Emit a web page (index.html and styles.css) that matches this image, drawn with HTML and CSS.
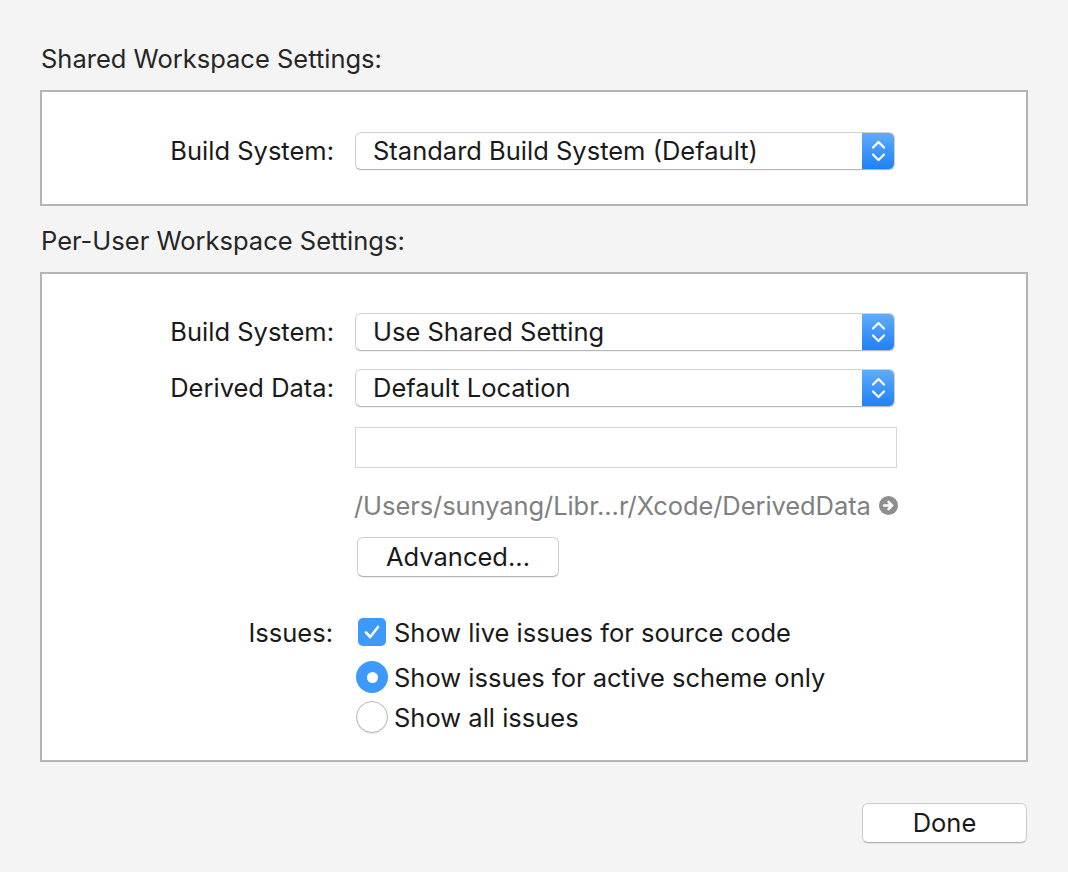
FILE: index.html
```html
<!DOCTYPE html>
<html>
<head>
<meta charset="utf-8">
<link rel="stylesheet" href="styles.css">
</head>
<body>
<div class="sheet">
  <div class="heading h1">Shared Workspace Settings:</div>
  <div class="box box1">
    <div class="row r-popup1">
      <div class="label">Build System:</div>
      <div class="popup">
        <span class="popup-text">Standard Build System (Default)</span>
        <span class="stepper"><svg width="33" height="38" viewBox="0 0 33 38"><path d="M11 15.5 L16.5 10 L22 15.5" fill="none" stroke="#fff" stroke-width="2.2" stroke-linecap="round" stroke-linejoin="round"/><path d="M11 22.5 L16.5 28 L22 22.5" fill="none" stroke="#fff" stroke-width="2.2" stroke-linecap="round" stroke-linejoin="round"/></svg></span>
      </div>
    </div>
  </div>

  <div class="heading h2">Per-User Workspace Settings:</div>
  <div class="box box2">
    <div class="row r-popup1">
      <div class="label">Build System:</div>
      <div class="popup">
        <span class="popup-text">Use Shared Setting</span>
        <span class="stepper"><svg width="33" height="38" viewBox="0 0 33 38"><path d="M11 15.5 L16.5 10 L22 15.5" fill="none" stroke="#fff" stroke-width="2.2" stroke-linecap="round" stroke-linejoin="round"/><path d="M11 22.5 L16.5 28 L22 22.5" fill="none" stroke="#fff" stroke-width="2.2" stroke-linecap="round" stroke-linejoin="round"/></svg></span>
      </div>
    </div>
    <div class="row r-popup2">
      <div class="label">Derived Data:</div>
      <div class="popup">
        <span class="popup-text">Default Location</span>
        <span class="stepper"><svg width="33" height="38" viewBox="0 0 33 38"><path d="M11 15.5 L16.5 10 L22 15.5" fill="none" stroke="#fff" stroke-width="2.2" stroke-linecap="round" stroke-linejoin="round"/><path d="M11 22.5 L16.5 28 L22 22.5" fill="none" stroke="#fff" stroke-width="2.2" stroke-linecap="round" stroke-linejoin="round"/></svg></span>
      </div>
    </div>
    <div class="row r-field">
      <div class="label"></div>
      <div class="field"></div>
    </div>
    <div class="row r-path">
      <div class="label"></div>
      <div class="path">
        <span>/Users/sunyang/Libr...r/Xcode/DerivedData</span>
        <svg class="go" width="19" height="19" viewBox="0 0 19 19"><circle cx="9.5" cy="9.5" r="9.5" fill="#8e8e8e"/><path d="M5 9.5 H13 M9.5 5.8 L13.2 9.5 L9.5 13.2" fill="none" stroke="#fff" stroke-width="2.4" stroke-linecap="round" stroke-linejoin="round"/></svg>
      </div>
    </div>
    <div class="row r-adv">
      <div class="label"></div>
      <div class="button adv">Advanced...</div>
    </div>
    <div class="row r-check">
      <div class="label issues">Issues:</div>
      <div class="opt">
        <span class="checkbox"><svg width="28" height="28" viewBox="0 0 28 28"><path d="M8 14.5 L12.2 19 L20 9" fill="none" stroke="#fff" stroke-width="2.6" stroke-linecap="round" stroke-linejoin="round"/></svg></span>
        <span class="opt-text">Show live issues for source code</span>
      </div>
    </div>
    <div class="row r-radio1">
      <div class="label"></div>
      <div class="opt">
        <span class="radio on"><span class="dot"></span></span>
        <span class="opt-text">Show issues for active scheme only</span>
      </div>
    </div>
    <div class="row r-radio2">
      <div class="label"></div>
      <div class="opt">
        <span class="radio off"></span>
        <span class="opt-text">Show all issues</span>
      </div>
    </div>
  </div>

  <div class="footer">
    <div class="button done">Done</div>
  </div>
</div>
</body>
</html>
```

FILE: styles.css
```css
html, body {
  margin: 0;
  padding: 0;
  background: #f4f4f4;
}
body {
  font-family: Inter, Roboto, "Liberation Sans", sans-serif;
  font-size: 25.5px;
  color: #1c1c1c;
  width: 1068px;
  height: 872px;
  overflow: hidden;
}
.sheet {
  padding: 44px 40px 0 40px;
  width: 988px;
}
.heading {
  height: 30px;
  line-height: 30px;
  padding-left: 1px;
  color: #262626;
}
.h1 { margin-bottom: 16px; }
.h2 { margin-top: 20px; margin-bottom: 16px; }
.box {
  background: #fff;
  border: 2px solid #b4b4b4;
  box-sizing: border-box;
  width: 988px;
}
.box1 {
  height: 116px;
  padding-top: 40px;
}
.box2 {
  height: 490px;
  padding-top: 39px;
}
.row {
  display: flex;
  align-items: center;
}
.label {
  width: 292px;
  flex: none;
  text-align: right;
  margin-right: 21px;
  padding-bottom: 2px;
  color: #1a1a1a;
}
.popup {
  width: 540px;
  height: 38px;
  box-sizing: border-box;
  background: #fff;
  border: 1px solid #cfcfcf;
  border-bottom-color: #b8b8b8;
  border-radius: 6px;
  display: flex;
  align-items: center;
  overflow: hidden;
  box-shadow: 0 1px 1px rgba(0,0,0,0.06);
}
.popup-text {
  flex: 1;
  padding-left: 17px;
  padding-bottom: 2px;
  color: #1a1a1a;
}
.stepper {
  width: 33px;
  height: 38px;
  flex: none;
  background: linear-gradient(#62adfb, #1c80f6);
  display: flex;
  align-items: center;
  justify-content: center;
  margin-right: -1px;
}
.r-popup2 { margin-top: 18px; }
.r-field { margin-top: 20px; }
.field {
  width: 542px;
  height: 41px;
  box-sizing: border-box;
  border: 1px solid #d6d6d6;
  background: #fff;
}
.r-path { margin-top: 22px; height: 30px; }
.path {
  display: flex;
  align-items: center;
  color: #808080;
  margin-left: -1px;
  letter-spacing: -0.08px;
}
.go { margin-left: 8px; }
.r-adv { margin-top: 17px; }
.button {
  height: 40px;
  box-sizing: border-box;
  background: #fff;
  border: 1px solid #cdcdcd;
  border-bottom-color: #b4b4b4;
  border-radius: 6px;
  display: flex;
  align-items: center;
  justify-content: center;
  padding-bottom: 2px;
  color: #1a1a1a;
  box-shadow: 0 1px 1px rgba(0,0,0,0.08);
}
.adv {
  width: 202px;
  margin-left: 2px;
}
.r-check { margin-top: 40px; height: 30px; }
.r-radio1 { margin-top: 15px; height: 30px; }
.r-radio2 { margin-top: 10px; height: 30px; }
.issues { margin-right: 23px; width: 291px; padding-bottom: 0; }
.opt {
  display: flex;
  align-items: center;
}
.checkbox {
  width: 28px;
  height: 28px;
  border-radius: 5px;
  background: #3d99fb;
  display: flex;
  margin-left: 2px;
  margin-right: 8px;
}
.radio {
  width: 32px;
  height: 32px;
  box-sizing: border-box;
  border-radius: 50%;
  display: flex;
  align-items: center;
  justify-content: center;
  margin-left: 1px;
  margin-right: 6px;
}
.radio.on {
  background: #3d99fb;
}
.radio .dot {
  width: 11px;
  height: 11px;
  border-radius: 50%;
  background: #fff;
}
.radio.off {
  background: #fff;
  border: 1px solid #b8b8b8;
  box-shadow: 0 1px 1px rgba(0,0,0,0.1);
}
.opt-text { color: #1a1a1a; }
.footer {
  display: flex;
  justify-content: flex-end;
  margin-top: 41px;
  margin-right: 1px;
}
.done { width: 165px; }
```
